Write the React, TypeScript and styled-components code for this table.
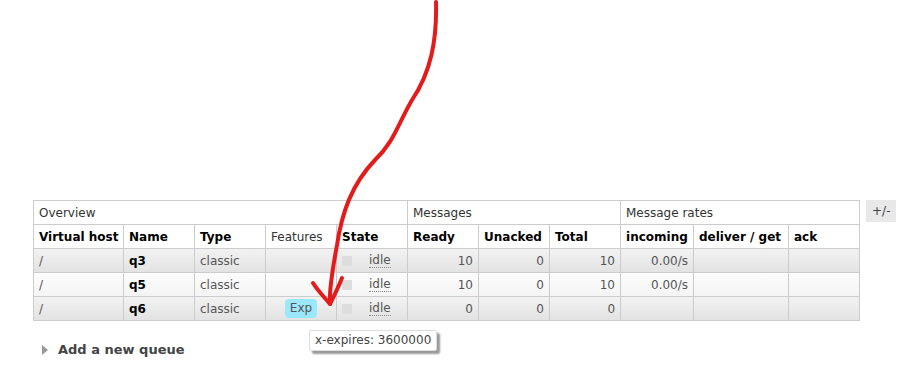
import React from "react";
import styled, { createGlobalStyle } from "styled-components";

type QueueRow = {
  vhost: string;
  name: string;
  type: string;
  features: string[];
  state: string;
  ready: number;
  unacked: number;
  total: number;
  incoming: string;
};

const rows: QueueRow[] = [
  { vhost: "/", name: "q3", type: "classic", features: [], state: "idle", ready: 10, unacked: 0, total: 10, incoming: "0.00/s" },
  { vhost: "/", name: "q5", type: "classic", features: [], state: "idle", ready: 10, unacked: 0, total: 10, incoming: "0.00/s" },
  { vhost: "/", name: "q6", type: "classic", features: ["Exp"], state: "idle", ready: 0, unacked: 0, total: 0, incoming: "" },
];

const colWidths = [90, 71, 71, 71, 71, 71, 71, 71, 73, 95, 71];

const GlobalStyle = createGlobalStyle`
  html, body {
    margin: 0;
    padding: 0;
    background: #fff;
    font-family: "DejaVu Sans", Verdana, sans-serif;
    font-size: 12px;
    color: #484848;
  }
`;

const Page = styled.div`
  position: relative;
  width: 908px;
  height: 368px;
  overflow: hidden;
  padding: 200px 0 0 33px;
  box-sizing: border-box;
`;

const TableArea = styled.div`
  display: flex;
  align-items: flex-start;
  gap: 6px;
`;

const StyledTable = styled.table`
  border-collapse: collapse;
  table-layout: fixed;
  width: 826px;
`;

const GroupCell = styled.th`
  border: 1px solid #ccc;
  height: 24px;
  padding: 1px 5px 0;
  box-sizing: border-box;
  text-align: left;
  font-weight: normal;
  color: #333;
  background: #fff;
`;

const HeaderCell = styled.th<{ $plain?: boolean }>`
  border: 1px solid #ccc;
  height: 24px;
  padding: 1px 5px 0;
  box-sizing: border-box;
  text-align: left;
  font-weight: ${(p) => (p.$plain ? "normal" : "bold")};
  color: ${(p) => (p.$plain ? "#333" : "#000")};
  background: #fff;
  white-space: nowrap;
`;

const DataRow = styled.tr<{ $alt: boolean }>`
  background: ${(p) =>
    p.$alt
      ? "linear-gradient(#fdfdfd, #f4f4f4)"
      : "linear-gradient(#f2f2f2, #e2e2e2)"};
`;

const Cell = styled.td<{ $align?: "left" | "right" | "center" }>`
  border: 1px solid #ccc;
  height: 24px;
  padding: 0 5px;
  box-sizing: border-box;
  color: #555;
  text-align: ${(p) => p.$align ?? "left"};
  white-space: nowrap;
`;

const NameCell = styled(Cell)`
  color: #000;
  font-weight: bold;
`;

const StateWrap = styled.span`
  display: flex;
  align-items: center;
  gap: 17px;
`;

const StateBox = styled.span`
  width: 10px;
  height: 10px;
  background: #ddd;
`;

const StateText = styled.abbr`
  text-decoration: none;
  border-bottom: 1px dotted #888;
  line-height: 14px;
  color: #555;
`;

const Badge = styled.abbr`
  display: inline-block;
  padding: 1px 5px;
  border-radius: 4px;
  background: #9be7fb;
  color: #555;
  text-decoration: none;
  line-height: 17px;
`;

const ToggleButton = styled.span`
  display: inline-block;
  padding: 0 6px;
  height: 22px;
  line-height: 22px;
  background: #e8e8e8;
  color: #444;
`;

const AddSection = styled.div`
  display: flex;
  align-items: center;
  gap: 10px;
  margin: 21px 0 0 9px;
  font-size: 13px;
  font-weight: bold;
  color: #444;
`;

const Triangle = styled.span`
  width: 0;
  height: 0;
  border-top: 5px solid transparent;
  border-bottom: 5px solid transparent;
  border-left: 6px solid #999;
`;

const Tooltip = styled.div`
  position: absolute;
  left: 309px;
  top: 330px;
  padding: 2px 5px;
  line-height: 15px;
  background: #fff;
  border: 1px solid #ddd;
  border-radius: 2px;
  color: #444;
  box-shadow: 3px 3px 2px #999;
`;

const Overlay = styled.svg`
  position: absolute;
  left: 0;
  top: 0;
  pointer-events: none;
`;

const Arrow = () => (
  <Overlay width="908" height="368" viewBox="0 0 908 368">
    <g fill="none" stroke="#e41b1b" strokeWidth="4" strokeLinecap="round" strokeLinejoin="round">
      <path d="M436,2 C437,40 431,72 412,100 C398,124 394,142 375,160 C352,184 342,212 337,245 C332,272 329,290 330,303" />
      <path d="M313,283 C318,291 325,298 330,304" />
      <path d="M342,278 C338,288 334,296 330,304" />
    </g>
  </Overlay>
);

const App: React.FC = () => (
  <Page>
    <GlobalStyle />
    <TableArea>
      <StyledTable>
        <colgroup>
          {colWidths.map((w, i) => (
            <col key={i} style={{ width: w }} />
          ))}
        </colgroup>
        <thead>
          <tr>
            <GroupCell colSpan={5}>Overview</GroupCell>
            <GroupCell colSpan={3}>Messages</GroupCell>
            <GroupCell colSpan={3}>Message rates</GroupCell>
          </tr>
          <tr>
            <HeaderCell>Virtual host</HeaderCell>
            <HeaderCell>Name</HeaderCell>
            <HeaderCell>Type</HeaderCell>
            <HeaderCell $plain>Features</HeaderCell>
            <HeaderCell>State</HeaderCell>
            <HeaderCell>Ready</HeaderCell>
            <HeaderCell>Unacked</HeaderCell>
            <HeaderCell>Total</HeaderCell>
            <HeaderCell>incoming</HeaderCell>
            <HeaderCell>deliver / get</HeaderCell>
            <HeaderCell>ack</HeaderCell>
          </tr>
        </thead>
        <tbody>
          {rows.map((r, i) => (
            <DataRow key={r.name} $alt={i % 2 === 1}>
              <Cell>{r.vhost}</Cell>
              <NameCell>{r.name}</NameCell>
              <Cell>{r.type}</Cell>
              <Cell $align="center">
                {r.features.map((f) => (
                  <Badge key={f} title="x-expires: 3600000">{f}</Badge>
                ))}
              </Cell>
              <Cell>
                <StateWrap>
                  <StateBox />
                  <StateText title={r.state}>{r.state}</StateText>
                </StateWrap>
              </Cell>
              <Cell $align="right">{r.ready}</Cell>
              <Cell $align="right">{r.unacked}</Cell>
              <Cell $align="right">{r.total}</Cell>
              <Cell $align="right">{r.incoming}</Cell>
              <Cell />
              <Cell />
            </DataRow>
          ))}
        </tbody>
      </StyledTable>
      <ToggleButton>+/-</ToggleButton>
    </TableArea>
    <AddSection>
      <Triangle />
      Add a new queue
    </AddSection>
    <Tooltip>x-expires: 3600000</Tooltip>
    <Arrow />
  </Page>
);

export default App;
